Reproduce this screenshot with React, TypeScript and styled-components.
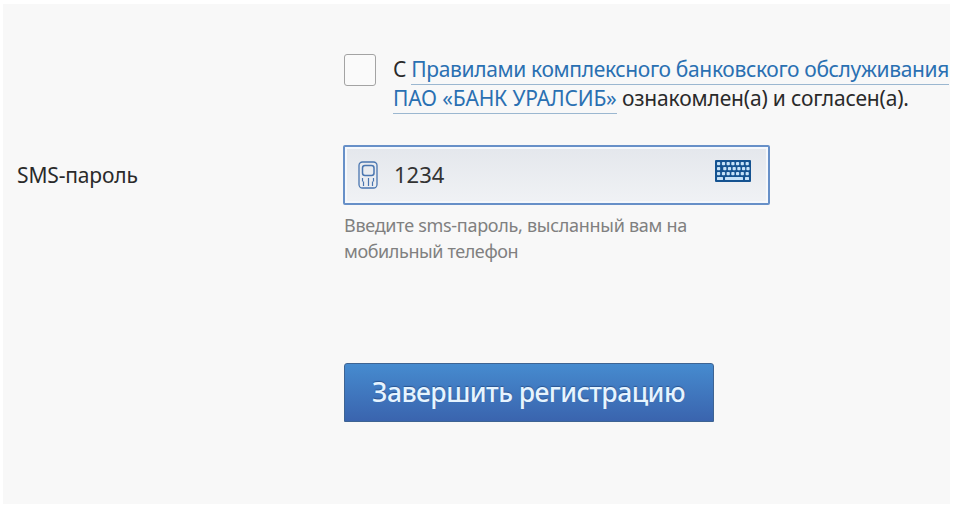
import styled, { createGlobalStyle } from 'styled-components'

const KEY_ROWS = [
  [2, 6.9, 11.6, 16.3, 21, 25.7, 30.6],
  [2, 8.2, 12.9, 17.6, 22.3, 27, 31.4],
  [2, 6.9, 11.6, 16.3, 21, 25.7, 30.6],
]

const PhoneIcon = () => (
  <svg width="20" height="28" viewBox="0 0 20 28" fill="none" stroke="#4a76b0">
    <rect x="1" y="1" width="18" height="26" rx="3.5" strokeWidth="1.3" />
    <rect x="4.5" y="4.5" width="11.5" height="10" rx="2.5" strokeWidth="1.5" />
    <path d="M4.5 17v3.5M5.5 20.500v4.500M10.500 17v8M15.500 17v3.500M14.500 20.500v4.500" strokeWidth="1.200" />
  </svg>
)

const KeyboardIcon = () => (
  <svg width="36" height="22" viewBox="0 0 36 22">
    <rect width="36" height="22" rx="1" fill="#155391" />
    <g fill="#c6e2f8">
      {KEY_ROWS.map((row, i) =>
        row.map((x) => (
          <rect key={`${i}-${x}`} x={x} y={2 + i * 5} width="3.2" height="3.2" rx="0.8" />
        ))
      )}
      <rect x="2" y="17" width="6" height="3" rx="0.5" />
      <rect x="10" y="17" width="18" height="3" rx="0.5" />
      <rect x="30" y="17" width="4" height="3" rx="0.5" />
    </g>
  </svg>
)

const App = () => (
  <>
    <GlobalStyle />
    <Page>
      <Panel>
        <Form>
          <Agreement>
            <Checkbox type="checkbox" />
            <AgreementText>
              <Line spacing={-0.35}>
                С <RulesLink href="#">Правилами комплексного банковского обслуживания</RulesLink>
              </Line>
              <Line spacing={-0.16}>
                <RulesLink href="#">ПАО «БАНК УРАЛСИБ»</RulesLink> ознакомлен(а) и согласен(а).
              </Line>
            </AgreementText>
          </Agreement>
          <Label htmlFor="sms">SMS-пароль</Label>
          <Field>
            <PhoneIcon />
            <Input id="sms" defaultValue="1234" />
            <KeyboardButton type="button">
              <KeyboardIcon />
            </KeyboardButton>
          </Field>
          <Hint>
            <Line spacing={-0.29}>Введите sms-пароль, высланный вам на</Line>
            <Line spacing={-0.4}>мобильный телефон</Line>
          </Hint>
          <Submit type="button">Завершить регистрацию</Submit>
        </Form>
      </Panel>
    </Page>
  </>
)

export default App

const GlobalStyle = createGlobalStyle`
  * {
    box-sizing: border-box;
  }
  body {
    margin: 0;
    background: #fff;
    color: #2a2a2a;
    font-family: 'Noto Sans', 'Open Sans', sans-serif;
  }
`

const Page = styled.div`
  height: 510px;
  padding: 4px 12px 6px 3px;
  overflow: hidden;
`

const Panel = styled.main`
  height: 500px;
  background: #f8f8f8;
`

const Form = styled.form`
  display: grid;
  grid-template-columns: 326px 427px;
  padding: 50px 0 0 14px;
`

const Agreement = styled.div`
  grid-column: 2;
  display: flex;
  gap: 17px;
  height: 91px;
  padding-left: 1px;
`

const Checkbox = styled.input`
  appearance: none;
  flex: none;
  width: 32px;
  height: 32px;
  margin: 0;
  background: #fafafa;
  border: 1px solid #a3a3a3;
  border-radius: 3px;
`

const AgreementText = styled.div`
  padding-top: 1px;
  font-size: 21px;
  line-height: 29px;
`

const Line = styled.div<{ spacing: number }>`
  letter-spacing: ${(props) => props.spacing}px;
  white-space: nowrap;
`

const RulesLink = styled.a`
  padding-bottom: 1px;
  color: #2a70b2;
  text-decoration: none;
  border-bottom: 1px solid #9bb7d0;
`

const Label = styled.label`
  align-self: center;
  font-size: 21px;
  letter-spacing: -0.15px;
`

const Field = styled.div`
  display: flex;
  align-items: center;
  height: 60px;
  padding: 0 16px 0 13px;
  background: linear-gradient(#e4e7ec, #f0f2f5);
  border: 2px solid #6790c8;
  border-radius: 2px;
  box-shadow: inset 0 0 0 2px #f5f8fc;
`

const Input = styled.input`
  flex: 1;
  min-width: 0;
  margin-left: 16px;
  padding: 0 0 2px;
  background: none;
  border: 0;
  outline: 0;
  color: #333;
  font: 22px 'Noto Sans', sans-serif;
`

const KeyboardButton = styled.button`
  display: flex;
  padding: 0 1px 8px 0;
  background: none;
  border: 0;
`

const Hint = styled.div`
  grid-column: 2;
  height: 158px;
  padding: 7px 0 0 1px;
  color: #808080;
  font-size: 18px;
  line-height: 26px;
`

const Submit = styled.button`
  grid-column: 2;
  width: 370px;
  height: 59px;
  margin-left: 0.5px;
  padding: 0 0 2px;
  background: linear-gradient(#468bcf, #3a64ae);
  border: 1px solid #3e6493;
  border-radius: 3px 3px 0 0;
  color: #e6f4ff;
  font: 500 26.5px 'Noto Sans', sans-serif;
  letter-spacing: -0.55px;
  white-space: nowrap;
  text-shadow: 0 -1px 1px rgba(20, 50, 100, 0.5);
`
